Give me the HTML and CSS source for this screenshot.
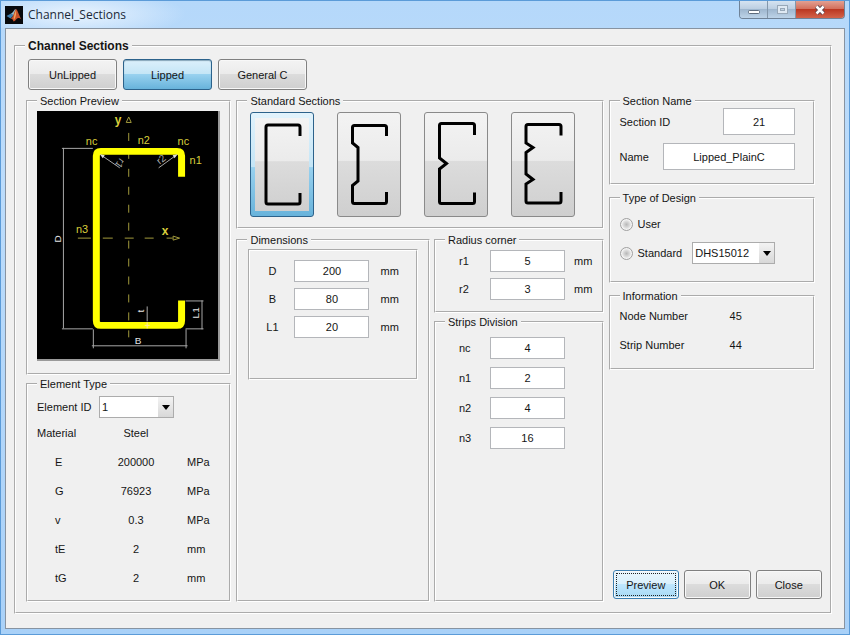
FILE: index.html
```html
<!DOCTYPE html>
<html lang="en">
<head>
<meta charset="utf-8">
<title>Channel_Sections</title>
<link rel="stylesheet" href="styles.css">
</head>
<body>
<div class="window">
  <header class="titlebar">
    <svg class="app-icon" viewBox="0 0 18 18" aria-hidden="true">
      <rect width="18" height="18" fill="#07090c"/>
      <path d="M1.500 10 L6 7.500 L8.500 9.500 L5.500 12.500 Z" fill="#3f7fae"/>
      <path d="M6 7.500 C8.500 6.500 9 3 11 3 L8.500 9.500 Z" fill="#8fb7c9"/>
      <path d="M11 3 C12.500 3.500 14 9.500 16.500 13.500 C14.500 11.500 13 11.500 11.500 13 C10.500 14.500 9.500 15.500 8.500 15.500 C8 13.500 7 12.500 5.500 12.500 C8.500 11.500 9 5.500 11 3 Z" fill="#c9502a"/>
      <path d="M11 4 C11.500 7 11 11 9 14 C8 12.500 9.500 8 11 4 Z" fill="#f2a25a"/>
    </svg>
    <h1 class="title">Channel_Sections</h1>
    <div class="caption">
      <button class="cap cap-min" type="button" aria-label="Minimize">
        <svg viewBox="0 0 14 12"><rect x="1.500" y="6.500" width="11" height="3" rx="1" fill="#fff" stroke="#5d6b7c"/></svg>
      </button>
      <button class="cap cap-max" type="button" aria-label="Maximize">
        <svg viewBox="0 0 14 12"><rect x="2.500" y="1.500" width="10" height="8" fill="#dfe9f3" stroke="#98a8b8"/><rect x="5.500" y="4.500" width="4" height="2" fill="#c3d3e3" stroke="#98a8b8"/></svg>
      </button>
      <button class="cap cap-close" type="button" aria-label="Close window">
        <svg viewBox="0 0 14 12"><path d="M3.500 2.500 L10.500 9.500 M10.500 2.500 L3.500 9.500" stroke="#5c4650" stroke-width="4.500"/><path d="M3.500 2.500 L10.500 9.500 M10.500 2.500 L3.500 9.500" stroke="#fff" stroke-width="2.500"/></svg>
      </button>
    </div>
  </header>

  <main class="client">
    <fieldset class="panel root">
      <legend class="root-legend">Channel Sections</legend>
      <nav class="tabs">
        <button class="btn tab" type="button">UnLipped</button>
        <button class="btn tab tab-on" type="button" aria-pressed="true">Lipped</button>
        <button class="btn tab" type="button">General C</button>
      </nav>

      <div class="columns">
        <div class="col-left">
          <fieldset class="panel">
            <legend>Section Preview</legend>
            <div class="preview-body">
              <svg class="preview" viewBox="37 111 182 249" role="img" aria-label="Lipped channel cross-section">
                <rect x="37" y="111" width="182" height="249" fill="#000"/>
                <g class="axis">
                  <path d="M129 133 V338" stroke-dasharray="8 10"/>
                  <path d="M78 238.500 H91 M103 238.500 H113 M125 238.500 H134 M145 238.500 H154 M167 238.500 H173"/>
                  <path d="M126.500 122.500 L129 117 L131.500 122.500 Z M173.500 236.500 L180 238.500 L173.500 240.500 Z"/>
                </g>
                <g class="dim">
                  <path d="M63.500 148 V329 M62 148.500 H93 M62 329.500 H93"/>
                  <path d="M93.500 330 V349 M186.500 330 V349 M92 346.500 H188"/>
                  <path d="M186 301.500 H204 M186 329.500 H204 M202.500 301 V330"/>
                  <path d="M147.500 307 V322 M120 168 L101 155 M159 168 L177 155"/>
                </g>
                <path class="profile" d="M182 177 V156 Q182 151.500 177.500 151.500 H101 Q96.500 151.500 96.500 156 V321 Q96.500 326 101 326 H177.500 Q182 326 182 321 V301"/>
                <path class="mark" d="M147.500 323 V329 M145 326 H150"/>
                <path class="heads" d="M100 154.500 L105 155.500 L103 158.500 Z M178 154.500 L173 155.500 L175 158.500 Z"/>
                <g class="names">
                  <text class="strong" x="115" y="124">y</text>
                  <text class="strong" x="162" y="235">x</text>
                  <text x="86" y="145">nc</text>
                  <text x="138" y="144">n2</text>
                  <text x="178" y="145">nc</text>
                  <text x="190" y="164">n1</text>
                  <text x="76" y="233">n3</text>
                </g>
                <g class="sizes">
                  <text transform="translate(61 243) rotate(-90)">D</text>
                  <text x="135" y="345">B</text>
                  <text transform="translate(199 319) rotate(-90)">L1</text>
                  <text transform="translate(144 313) rotate(-90)">t</text>
                  <text class="radius" transform="translate(120 158) rotate(125)">r1</text>
                  <text class="radius" transform="translate(160 165) rotate(-38)">r2</text>
                </g>
              </svg>
            </div>
          </fieldset>

          <fieldset class="panel grow">
            <legend>Element Type</legend>
            <div class="element-body">
              <div class="element-row">
                <label for="element-id">Element ID</label>
                <span class="select"><select id="element-id"><option>1</option></select></span>
              </div>
              <table class="props">
                <tbody>
                  <tr class="material"><th scope="row">Material</th><td>Steel</td><td></td></tr>
                  <tr><th scope="row">E</th><td>200000</td><td>MPa</td></tr>
                  <tr><th scope="row">G</th><td>76923</td><td>MPa</td></tr>
                  <tr><th scope="row">v</th><td>0.3</td><td>MPa</td></tr>
                  <tr><th scope="row">tE</th><td>2</td><td>mm</td></tr>
                  <tr><th scope="row">tG</th><td>2</td><td>mm</td></tr>
                </tbody>
              </table>
            </div>
          </fieldset>
        </div>

        <div class="col-middle">
          <fieldset class="panel">
            <legend>Standard Sections</legend>
            <div class="shapes">
              <button class="shape shape-on" type="button" aria-label="Plain channel" aria-pressed="true">
                <svg viewBox="1 1 62 103"><path d="M50 24 V15 Q50 13 48 13 H18 Q16 13 16 15 V90 Q16 92 18 92 H48 Q50 92 50 90 V81"/></svg>
              </button>
              <button class="shape" type="button" aria-label="Channel with recessed web">
                <svg viewBox="1 1 62 103"><path d="M49.500 24 V15.500 Q49.500 13.500 47.500 13.500 H17.500 Q15.500 13.500 15.500 15.500 V31 L21 35.500 V69 L15.500 73.500 V89.500 Q15.500 91.500 17.500 91.500 H47.500 Q49.500 91.500 49.500 89.500 V80"/></svg>
              </button>
              <button class="shape" type="button" aria-label="Channel with one notch">
                <svg viewBox="1 1 62 103"><path d="M50.500 23 V13.500 Q50.500 11.500 48.500 11.500 H17.500 Q15.500 11.500 15.500 13.500 V46 L22.500 51.500 L15.500 57 V89.500 Q15.500 91.500 17.500 91.500 H48.500 Q50.500 91.500 50.500 89.500 V80.500"/></svg>
              </button>
              <button class="shape" type="button" aria-label="Channel with two notches">
                <svg viewBox="1 1 62 103"><path d="M50 23.500 V14.500 Q50 12.500 48 12.500 H17 Q15 12.500 15 14.500 V31 L22 35.500 L15 40.500 V62 L22 67.500 L15 72 V89 Q15 91 17 91 H48 Q50 91 50 89 V80"/></svg>
              </button>
            </div>
          </fieldset>

          <div class="split">
            <fieldset class="panel">
              <legend>Dimensions</legend>
              <div class="dims">
                <div class="row"><label for="d">D</label><input id="d" value="200"><span>mm</span></div>
                <div class="row"><label for="b">B</label><input id="b" value="80"><span>mm</span></div>
                <div class="row"><label for="l1">L1</label><input id="l1" value="20"><span>mm</span></div>
              </div>
            </fieldset>

            <div class="stack">
              <fieldset class="panel">
                <legend>Radius corner</legend>
                <div class="radii">
                  <div class="row"><label for="r1">r1</label><input id="r1" value="5"><span>mm</span></div>
                  <div class="row"><label for="r2">r2</label><input id="r2" value="3"><span>mm</span></div>
                </div>
              </fieldset>
              <fieldset class="panel grow">
                <legend>Strips Division</legend>
                <div class="strips">
                  <div class="row"><label for="nc">nc</label><input id="nc" value="4"></div>
                  <div class="row"><label for="n1">n1</label><input id="n1" value="2"></div>
                  <div class="row"><label for="n2">n2</label><input id="n2" value="4"></div>
                  <div class="row"><label for="n3">n3</label><input id="n3" value="16"></div>
                </div>
              </fieldset>
            </div>
          </div>
        </div>

        <div class="col-right">
          <fieldset class="panel">
            <legend>Section Name</legend>
            <div class="naming">
              <div class="name-row"><label for="section-id">Section ID</label><input class="short" id="section-id" value="21"></div>
              <div class="name-row"><label for="name">Name</label><input class="long" id="name" value="Lipped_PlainC"></div>
            </div>
          </fieldset>

          <fieldset class="panel">
            <legend>Type of Design</legend>
            <div class="design">
              <div class="radio-row"><input type="radio" name="design" id="user"><label for="user">User</label></div>
              <div class="radio-row">
                <input type="radio" name="design" id="standard"><label for="standard">Standard</label>
                <span class="select select-wide"><select aria-label="Standard profile"><option>DHS15012</option></select></span>
              </div>
            </div>
          </fieldset>

          <fieldset class="panel">
            <legend>Information</legend>
            <dl class="info">
              <dt>Node Number</dt><dd>45</dd>
              <dt>Strip Number</dt><dd>44</dd>
            </dl>
          </fieldset>

          <div class="actions">
            <button class="btn action-on" type="button">Preview</button>
            <button class="btn" type="button">OK</button>
            <button class="btn" type="button">Close</button>
          </div>
        </div>
      </div>
    </fieldset>
  </main>
</div>
</body>
</html>
```
FILE: styles.css
```css
* {
  box-sizing: border-box;
}

body {
  margin: 0;
  font: 11px/14px "Liberation Sans", Arial, sans-serif;
  color: #151515;
}

button,
input,
select {
  font: inherit;
  color: inherit;
  margin: 0;
}

.window {
  display: flex;
  flex-direction: column;
  min-height: 100vh;
  padding: 0 4px 5px;
  border: 1px solid #5b9bd8;
  background: linear-gradient(#b5d8fa, #bcdcfb 180px, #a9d1f8);
}

/* Title bar */
.titlebar {
  display: flex;
  align-items: center;
  height: 27px;
  margin: 0 -4px;
  padding: 0 4px;
  background: radial-gradient(ellipse 110px 24px at 75px 13px, #dfeefd 20%, rgba(223, 238, 253, 0));
}

.app-icon {
  width: 18px;
  height: 18px;
}

.title {
  flex: 1;
  margin: 0 0 0 5px;
  font: 12px/16px "Open Sans", "Noto Sans", sans-serif;
  color: #1c2a3a;
}

.caption {
  display: flex;
  align-self: flex-start;
  border: 1px solid #6f8297;
  border-top: 0;
  border-radius: 0 0 4px 4px;
  overflow: hidden;
}

.cap {
  display: flex;
  align-items: center;
  justify-content: center;
  height: 17px;
  padding: 0;
  border: 0;
  background: linear-gradient(#d5e3f1, #bccfe2 45%, #9fb7cf 50%, #bdd3e8);
}

.cap svg {
  width: 14px;
  height: 12px;
}

.cap-min,
.cap-max {
  width: 28px;
  border-right: 1px solid #8397ab;
}

.cap-close {
  width: 48px;
  background: linear-gradient(#e2a092, #d4705c 45%, #bb3822 50%, #d3634a);
}

/* Panels */
.client {
  flex: 1;
  display: flex;
  padding: 10px 12px 14px 8px;
  border: 1px solid #8793a1;
  background: #f0f0f0;
}

.panel {
  min-width: 0;
  margin: 0;
  padding: 0;
  border: 2px groove #fff;
}

.panel legend {
  margin-left: 9px;
  padding: 0 3px;
}

.root {
  flex: 1;
  display: flex;
  flex-direction: column;
}

.panel .root-legend {
  font-size: 12px;
  font-weight: bold;
}

.grow {
  flex: 1;
}

.columns {
  flex: 1;
  display: grid;
  grid-template-columns: 206fr 368fr 214fr;
  gap: 5px;
  padding: 4px 8px 10px 10px;
}

.col-left,
.col-middle,
.col-right,
.stack {
  display: flex;
  flex-direction: column;
  gap: 2px;
}

.columns .col-middle {
  gap: 4px;
}

/* Buttons */
.btn {
  height: 29px;
  padding: 0;
  border: 1px solid #808080;
  border-radius: 3px;
  background: linear-gradient(#f3f3f3, #ebebeb 49%, #dcdcdc 50%, #cfcfcf);
  box-shadow: inset 0 0 0 1px #f8f8f8;
}

.tabs {
  display: flex;
  gap: 6px;
  padding: 6px 12px 0;
}

.tab {
  width: 89px;
  height: 31px;
}

.tab-on {
  border-color: #2c628b;
  background: linear-gradient(#dcf0fb, #c4e5f6 49%, #98d1ef 50%, #68b3db);
  box-shadow: inset 0 1px 1px #86a5b8;
}

/* Left column */
.preview-body {
  padding: 3px 9px 12px;
}

.preview {
  display: block;
  width: 100%;
  border: 0 solid #9a9a9a;
  border-width: 0 2px 2px 0;
}

.axis {
  fill: none;
  stroke: #a39b3c;
}

.dim {
  fill: none;
  stroke: #a8a8a8;
}

.profile {
  fill: none;
  stroke: #ff0;
  stroke-width: 7;
}

.mark {
  stroke: #ffe9a0;
}

.heads {
  fill: #ddd;
}

.names {
  font-size: 11px;
  fill: #d8cd3c;
}

.strong {
  font-size: 12px;
  font-weight: bold;
}

.sizes {
  font-size: 10px;
  fill: #e4e4e4;
}

.radius {
  fill: #a8a8a8;
}

.element-body {
  padding: 5px 9px 8px;
}

.element-row {
  display: flex;
  align-items: center;
}

.element-row label {
  width: 62px;
}

.select {
  position: relative;
  display: block;
  width: 75px;
}

.select select {
  display: block;
  width: 100%;
  height: 22px;
  padding: 0 2px;
  border: 1px solid #acacac;
  border-radius: 0;
  background: #fff;
  appearance: none;
}

.select::before {
  content: "";
  position: absolute;
  top: 1px;
  right: 1px;
  bottom: 1px;
  width: 15px;
  background: linear-gradient(#f3f3f3, #d8d8d8);
  pointer-events: none;
}

.select::after {
  content: "";
  position: absolute;
  top: 9px;
  right: 4px;
  border: 4px solid transparent;
  border-top: 5px solid #000;
  border-bottom: 0;
  pointer-events: none;
}

.props {
  width: 100%;
  table-layout: fixed;
  border-collapse: collapse;
}

.props th,
.props td {
  height: 29px;
  padding: 0;
  font-weight: normal;
}

.props th {
  width: 59px;
  padding-left: 18px;
  text-align: left;
}

.props td {
  width: 80px;
  text-align: center;
}

.props td:last-child {
  width: auto;
  padding-left: 11px;
  text-align: left;
}

.props .material th {
  padding-left: 0;
}

/* Middle column */
.shapes {
  display: flex;
  gap: 23px;
  padding: 4px 12px 10px;
}

.shape {
  width: 64px;
  padding: 0;
  border: 1px solid #8a8a8a;
  border-radius: 3px;
  background: linear-gradient(#f3f3f3, #ebebeb 46%, #dcdcdc 47%, #cfcfcf);
}

.shape svg {
  display: block;
  width: 100%;
  fill: none;
  stroke: #000;
  stroke-width: 3;
}

.shape-on {
  border-color: #2c628b;
  background:
    linear-gradient(#f3f3f3, #ebebeb 46%, #dcdcdc 47%, #cfcfcf) content-box,
    linear-gradient(#e2f3fc, #c4e5f6 52%, #98d1ef 53%, #68b3db);
  padding: 5px 4px;
}

.shape-on svg {
  width: calc(100% + 8px);
  margin: -5px -4px;
}

.split {
  flex: 1;
  display: grid;
  grid-template-columns: 194fr 170fr;
  gap: 4px;
}

.dims,
.radii,
.strips {
  display: flex;
  flex-direction: column;
  gap: 6px;
}

.dims {
  margin: 2px 10px;
  padding: 9px 0 40px;
  border: 2px groove #fff;
}

.radii {
  padding: 3px 0 11px;
}

.strips {
  gap: 8px;
  padding: 8px 0;
}

.row {
  display: flex;
  align-items: center;
}

.row label {
  width: 54px;
  padding-left: 23px;
}

.row span {
  margin-left: 9px;
}

.row input,
.name-row input {
  width: 75px;
  height: 22px;
  padding: 0;
  border: 1px solid #b4b6ba;
  background: #fff;
  text-align: center;
}

.dims label {
  width: 44px;
  padding: 0;
  text-align: center;
}

.dims span {
  margin-left: 11px;
}

/* Right column */
.columns .col-right {
  gap: 6px;
}

.col-right .panel {
  margin-right: 7px;
}

.naming {
  display: flex;
  flex-direction: column;
  gap: 8px;
  padding: 0 18px 13px 9px;
}

.name-row {
  display: flex;
  align-items: center;
  justify-content: space-between;
}

.name-row .short {
  width: 72px;
  height: 27px;
}

.name-row .long {
  width: 132px;
  height: 27px;
}

.design {
  display: flex;
  flex-direction: column;
  gap: 7px;
  padding: 8px 9px 17px;
}

.radio-row {
  display: flex;
  align-items: center;
  min-height: 22px;
}

.radio-row input {
  width: 13px;
  height: 13px;
  border: 1px solid #a0a0a0;
  border-radius: 50%;
  background: radial-gradient(#b8b8b8, #ececec 60%);
  box-shadow: inset 0 0 0 1px #f4f4f4;
  appearance: none;
}

.radio-row label {
  margin-left: 5px;
}

.select-wide {
  width: 83px;
  margin-left: 10px;
}

.info {
  display: grid;
  grid-template-columns: 110px 1fr;
  gap: 7px 0;
  margin: 0;
  padding: 2px 9px 12px;
  line-height: 22px;
}

.info dd {
  margin: 0;
}

.actions {
  display: flex;
  gap: 5px;
  margin: auto 0 3px 4px;
}

.actions .btn {
  flex: 1;
}

.action-on {
  border-color: #3c7fb1;
  background: linear-gradient(#eaf6fd, #d9f0fc 49%, #bee6fd 50%, #a7d9f5);
  outline: 1px dotted #222;
  outline-offset: -4px;
}
```
